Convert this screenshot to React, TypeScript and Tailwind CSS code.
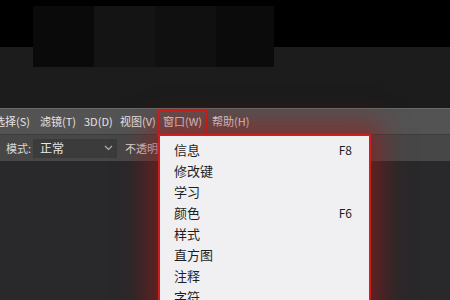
const menus = [
  { label: '选择(S)', w: 'w-[46px]' },
  { label: '滤镜(T)', w: 'w-[44px]' },
  { label: '3D(D)', w: 'w-[36px]' },
  { label: '视图(V)', w: 'w-[37px]' },
];

const items: { name: string; key?: string }[] = [
  { name: '信息', key: 'F8' },
  { name: '修改键' },
  { name: '学习' },
  { name: '颜色', key: 'F6' },
  { name: '样式' },
  { name: '直方图' },
  { name: '注释' },
  { name: '字符' },
];

export default function App() {
  return (
    <div
      className="relative w-[450px] h-[300px] overflow-hidden bg-[#29282a]"
      style={{ fontFamily: '"Noto Sans CJK SC", "Noto Sans", sans-serif' }}
    >
      {/* title area */}
      <div className="h-[108px] bg-[linear-gradient(to_bottom,#000_47px,#1c1c1c_47px)] pt-[6px] pl-[33px]">
        <div className="flex h-[61px] w-[241px]">
          <div className="w-[61px] bg-[#0a0a0a]" />
          <div className="w-[61px] bg-[#141414]" />
          <div className="w-[61px] bg-[#101010]" />
          <div className="w-[58px] bg-[#0b0b0b]" />
        </div>
      </div>

      {/* menu bar */}
      <div className="flex h-[26px] items-center border-t border-[#6a6a6a] bg-[#535353] text-[11px] text-[#e4e4e4] -ml-[6px]">
        {menus.map((m) => (
          <div key={m.label} className={`${m.w} shrink-0`}>
            {m.label}
          </div>
        ))}
        <div className="flex h-[26px] w-[51px] shrink-0 items-center justify-center border-2 border-[#d01c1c] bg-[#5d5050]">
          窗口(W)
        </div>
        <div className="ml-[4px]">帮助(H)</div>
      </div>

      {/* options bar */}
      <div className="flex h-[27px] items-center border-t border-[#3c3c3c] bg-[#474747] text-[11px] text-[#d8d8d8]">
        <span className="ml-[6px] w-[27px]">模式:</span>
        <div className="flex h-[19px] w-[84px] items-center justify-between border border-[#3a3a3a] bg-[#3b3b3b] pl-[6px] pr-[3px] text-[12px] text-[#e6e6e6]">
          <span>正常</span>
          <svg width="9" height="6" viewBox="0 0 9 6" fill="none" stroke="#b0b0b0" strokeWidth="1.2">
            <path d="M1 1l3.5 3.5L8 1" />
          </svg>
        </div>
        <span className="ml-[8px]">不透明度</span>
      </div>

      {/* dropdown */}
      <div className="absolute left-[158px] top-[134px] w-[213px] h-[180px] border-2 border-[#cf1e1e] bg-[#f0eff2] shadow-[0_0_26px_10px_rgba(160,25,25,0.6)]">
        <div className="pt-[3px]">
          {items.map((it) => (
            <div
              key={it.name}
              className="flex h-[21px] items-center justify-between pl-[14px] pr-[17px] text-[13px] text-[#1e1e1e]"
            >
              <span>{it.name}</span>
              {it.key && <span className="text-[12px]">{it.key}</span>}
            </div>
          ))}
        </div>
      </div>
    </div>
  );
}
